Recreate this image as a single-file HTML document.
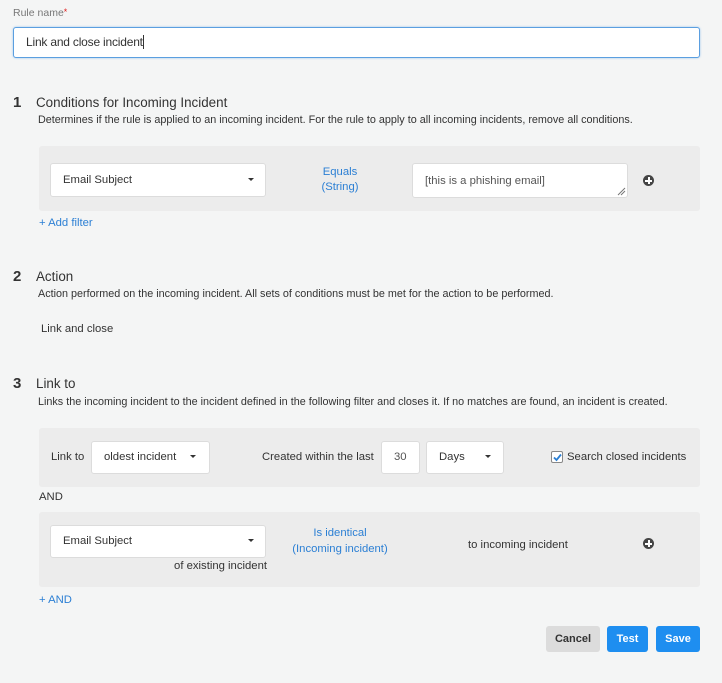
<!DOCTYPE html>
<html><head><meta charset="utf-8">
<style>
*{box-sizing:border-box;margin:0;padding:0}
body{width:722px;height:683px;background:#f4f5f5;font-family:"Liberation Sans",sans-serif;color:#333;position:relative;overflow:hidden}
.a{position:absolute;white-space:nowrap}
.panel{position:absolute;background:#ececec;border-radius:3px}
.box{position:absolute;background:#fff;border:1px solid #dcdcdc;border-radius:3px}
.sm{font-size:11.3px;letter-spacing:0}
.desc{font-size:10.8px;color:#333}
.num{font-size:15px;font-weight:bold;color:#333}
.h{font-size:13.4px;color:#333}
.blue{color:#2b7fd4}
.caret{position:absolute;width:0;height:0;border-left:3px solid transparent;border-right:3px solid transparent;border-top:3px solid #333}
.plus{position:absolute;width:11px;height:11px;border-radius:50%;background:#444}
.plus:before{content:"";position:absolute;left:2px;top:4.5px;width:7px;height:2px;background:#fff}
.plus:after{content:"";position:absolute;left:4.5px;top:2px;width:2px;height:7px;background:#fff}
.btn{position:absolute;height:26px;border-radius:3px;font-size:11px;font-weight:bold;display:flex;align-items:center;justify-content:center}
</style></head><body>
<div class="a sm" style="left:13px;top:7px;color:#777;font-size:10.5px">Rule name<span style="color:#e02020;font-size:9px;vertical-align:top">*</span></div>
<div class="box" style="left:13px;top:27px;width:687px;height:31px;border:1px solid #5b9fe0;box-shadow:0 0 2px #9cc6ef"></div>
<div class="a" style="left:26px;top:35px;font-size:12px;letter-spacing:-0.2px">Link and close incident<span style="border-left:1px solid #333;margin-left:0px">&#8203;</span></div>

<div class="a num" style="left:13px;top:94px">1</div>
<div class="a h" style="left:36px;top:95px">Conditions for Incoming Incident</div>
<div class="a desc" style="left:38px;top:114px">Determines if the rule is applied to an incoming incident. For the rule to apply to all incoming incidents, remove all conditions.</div>
<div class="panel" style="left:39px;top:146px;width:661px;height:65px"></div>
<div class="box" style="left:50px;top:163px;width:216px;height:34px"></div>
<div class="a sm" style="left:63px;top:174px">Email Subject</div>
<div class="caret" style="left:248px;top:178px"></div>
<div class="a sm blue" style="left:300px;top:165px;width:80px;text-align:center;line-height:15px">Equals<br>(String)</div>
<div class="box" style="left:412px;top:163px;width:216px;height:35px"></div>
<div class="a sm" style="left:425px;top:175px;color:#555">[this is a phishing email]</div>
<svg class="a" style="left:617px;top:187px" width="9" height="9"><path d="M1 8L8 1M4 8L8 4" stroke="#777" stroke-width="1"/></svg>
<div class="plus" style="left:643px;top:175px"></div>
<div class="a sm blue" style="left:39px;top:217px">+ Add filter</div>

<div class="a num" style="left:13px;top:268px">2</div>
<div class="a h" style="left:36px;top:269px">Action</div>
<div class="a desc" style="left:38px;top:288px">Action performed on the incoming incident. All sets of conditions must be met for the action to be performed.</div>
<div class="a sm" style="left:41px;top:323px">Link and close</div>

<div class="a num" style="left:13px;top:375px">3</div>
<div class="a h" style="left:36px;top:376px">Link to</div>
<div class="a desc" style="left:38px;top:396px">Links the incoming incident to the incident defined in the following filter and closes it. If no matches are found, an incident is created.</div>
<div class="panel" style="left:39px;top:428px;width:661px;height:59px"></div>
<div class="a sm" style="left:51px;top:451px">Link to</div>
<div class="box" style="left:91px;top:441px;width:119px;height:33px"></div>
<div class="a sm" style="left:104px;top:451px">oldest incident</div>
<div class="caret" style="left:190px;top:455px"></div>
<div class="a sm" style="left:262px;top:451px">Created within the last</div>
<div class="box" style="left:381px;top:441px;width:39px;height:33px"></div>
<div class="a sm" style="left:394px;top:451px;color:#555">30</div>
<div class="box" style="left:426px;top:441px;width:78px;height:33px"></div>
<div class="a sm" style="left:439px;top:451px">Days</div>
<div class="caret" style="left:485px;top:455px"></div>
<div class="a" style="left:551px;top:451px;width:12px;height:12px;border:1px solid #888;border-radius:2px;background:#fff"></div>
<svg class="a" style="left:552px;top:452px" width="11" height="11"><path d="M2 5.5L4.5 8L9 2.5" stroke="#2b7fd4" stroke-width="1.8" fill="none"/></svg>
<div class="a sm" style="left:567px;top:451px">Search closed incidents</div>
<div class="a sm" style="left:39px;top:491px">AND</div>

<div class="panel" style="left:39px;top:512px;width:661px;height:75px"></div>
<div class="box" style="left:50px;top:525px;width:216px;height:33px"></div>
<div class="a sm" style="left:63px;top:535px">Email Subject</div>
<div class="caret" style="left:248px;top:539px"></div>
<div class="a sm" style="left:150px;top:560px;width:117px;text-align:right">of existing incident</div>
<div class="a sm blue" style="left:270px;top:525px;width:140px;text-align:center;line-height:16px">Is identical<br>(Incoming incident)</div>
<div class="a sm" style="left:468px;top:539px">to incoming incident</div>
<div class="plus" style="left:643px;top:538px"></div>
<div class="a sm blue" style="left:39px;top:594px">+ AND</div>

<div class="btn" style="left:546px;top:626px;width:54px;background:#dcdcdc;color:#333">Cancel</div>
<div class="btn" style="left:607px;top:626px;width:41px;background:#1e8ef0;color:#fff">Test</div>
<div class="btn" style="left:656px;top:626px;width:44px;background:#1e8ef0;color:#fff">Save</div>
</body></html>
